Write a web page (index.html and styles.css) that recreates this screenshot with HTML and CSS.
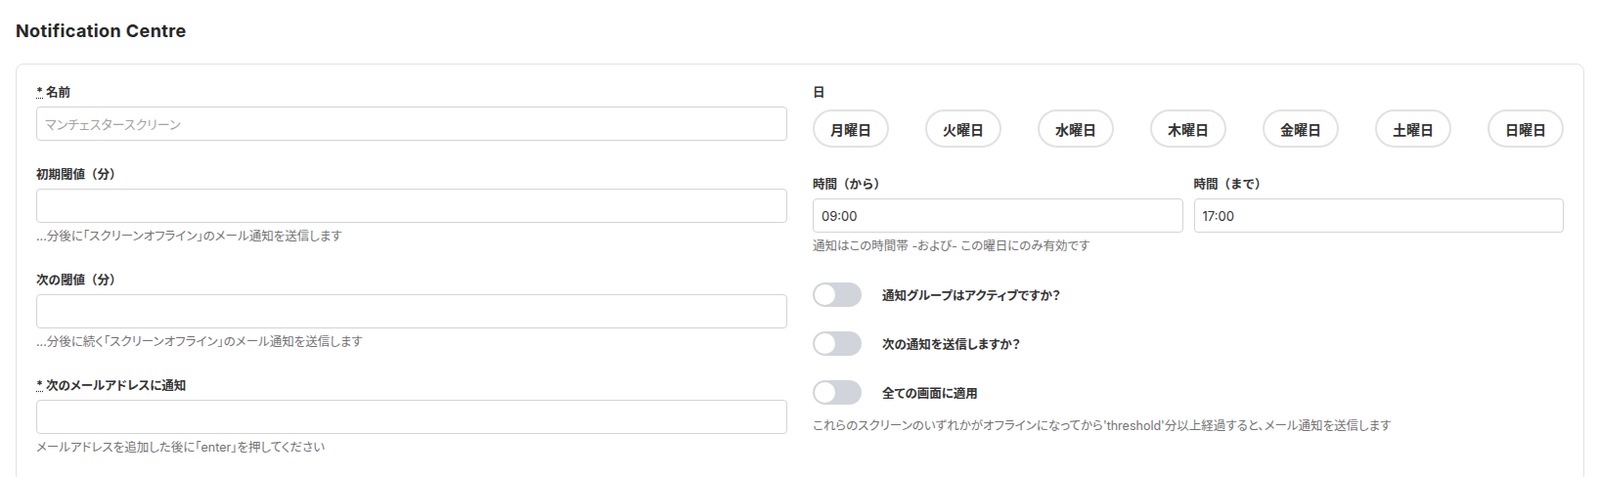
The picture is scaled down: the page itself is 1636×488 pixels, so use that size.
FILE: index.html
```html
<!DOCTYPE html>
<html lang="ja">
<head>
    <meta charset="UTF-8">
    <meta name="viewport" content="width=device-width, initial-scale=1.0">
    <title>Notification Centre</title>
    <link rel="stylesheet" href="styles.css">
</head>
<body>
    <h2 class="page-title">Notification Centre</h2>

    <div class="card">
        <div class="form-grid">
            <!-- 左の列 -->
            <div class="col">
                <div class="field">
                    <label class="label"><abbr title="required">*</abbr> 名前</label>
                    <input class="input" type="text" placeholder="マンチェスタースクリーン">
                </div>
                <div class="field">
                    <label class="label label-paren">初期閾値（分）</label>
                    <input class="input" type="text">
                    <p class="help">...分後に「スクリーンオフライン」のメール通知を送信します</p>
                </div>
                <div class="field">
                    <label class="label label-paren">次の閾値（分）</label>
                    <input class="input" type="text">
                    <p class="help">...分後に続く「スクリーンオフライン」のメール通知を送信します</p>
                </div>
                <div class="field">
                    <label class="label"><abbr title="required">*</abbr> 次のメールアドレスに通知</label>
                    <input class="input" type="text">
                    <p class="help">メールアドレスを追加した後に「enter」を押してください</p>
                </div>
            </div>

            <!-- 右の列 -->
            <div class="col">
                <div class="field field-days">
                    <label class="label label-days">日</label>
                    <div class="days">
                        <button class="day">月曜日</button>
                        <button class="day">火曜日</button>
                        <button class="day">水曜日</button>
                        <button class="day">木曜日</button>
                        <button class="day">金曜日</button>
                        <button class="day">土曜日</button>
                        <button class="day">日曜日</button>
                    </div>
                </div>
                <div class="field field-time">
                    <div class="times">
                        <div>
                            <label class="label label-paren">時間（から）</label>
                            <input class="input" type="text" value="09:00">
                        </div>
                        <div>
                            <label class="label label-paren">時間（まで）</label>
                            <input class="input" type="text" value="17:00">
                        </div>
                    </div>
                    <p class="help">通知はこの時間帯 -および- この曜日にのみ有効です</p>
                </div>
                <div class="toggles">
                    <div class="toggle-row">
                        <span class="toggle"></span>
                        <span class="toggle-label">通知グループはアクティブですか？</span>
                    </div>
                    <div class="toggle-row">
                        <span class="toggle"></span>
                        <span class="toggle-label">次の通知を送信しますか？</span>
                    </div>
                    <div class="toggle-row">
                        <span class="toggle"></span>
                        <span class="toggle-label">全ての画面に適用</span>
                    </div>
                </div>
                <p class="help help-last">これらのスクリーンのいずれかがオフラインになってから'threshold'分以上経過すると、メール通知を送信します</p>
            </div>
        </div>
    </div>
</body>
</html>
```

FILE: styles.css
```css
body {
    margin: 0;
    padding: 0 16px;
    font-family: Inter, "Noto Sans CJK JP", sans-serif;
    color: #333;
    background-color: #fff;
}
.page-title {
    margin: 0;
    padding: 20px 0 21px;
    font-size: 18px;
    line-height: 24px;
    font-weight: 700;
    letter-spacing: 0.4px;
    color: #262626;
}
.card {
    border: 1px solid #e2e2e6;
    border-radius: 8px;
    padding: 19px 20px 30px;
    min-height: 420px;
}
.form-grid {
    display: grid;
    grid-template-columns: 1fr 1fr;
    column-gap: 26px;
}
.field {
    margin-bottom: 25px;
}
.label {
    display: block;
    font-size: 12.5px;
    line-height: 20px;
    font-weight: 700;
    color: #333;
    margin-bottom: 4px;
    font-feature-settings: "palt";
}
.label-paren {
    font-feature-settings: normal;
}
.label abbr {
    text-decoration: underline dotted;
}
.label-days {
    margin-bottom: 7px;
}
.field-days {
    margin-bottom: 28px;
}
.input {
    display: block;
    box-sizing: border-box;
    width: 100%;
    height: 35px;
    padding: 0 8px;
    border: 1px solid #d3d3d9;
    border-radius: 4px;
    font-family: Inter, "Noto Sans CJK JP", sans-serif;
    font-size: 13px;
    color: #333;
    outline: none;
}
.input::placeholder {
    color: #a3a3a3;
    font-feature-settings: "palt";
}
.help {
    margin: 4px 0 0;
    font-size: 12.5px;
    line-height: 20px;
    color: #737373;
    font-feature-settings: "palt";
}
.days {
    display: flex;
    justify-content: space-between;
}
.day {
    width: 78px;
    height: 39px;
    border: 2px solid #e1e1e6;
    border-radius: 20px;
    background-color: #fff;
    font-family: Inter, "Noto Sans CJK JP", sans-serif;
    font-size: 14px;
    font-weight: 700;
    color: #333;
    padding: 0;
}
.field-time {
    margin-bottom: 27px;
}
.times {
    display: grid;
    grid-template-columns: 1fr 1fr;
    column-gap: 11px;
}
.toggles {
    display: flex;
    flex-direction: column;
    gap: 25px;
}
.toggle-row {
    display: flex;
    align-items: center;
    gap: 21px;
}
.toggle {
    position: relative;
    width: 50px;
    height: 25px;
    border-radius: 13px;
    background-color: #d1d5db;
    flex-shrink: 0;
}
.toggle::after {
    content: "";
    position: absolute;
    left: 2px;
    top: 2px;
    width: 21px;
    height: 21px;
    border-radius: 50%;
    background-color: #fff;
}
.toggle-label {
    font-size: 12.5px;
    font-weight: 700;
    color: #333;
    font-feature-settings: "palt";
}
.help-last {
    margin-top: 12px;
}
```
